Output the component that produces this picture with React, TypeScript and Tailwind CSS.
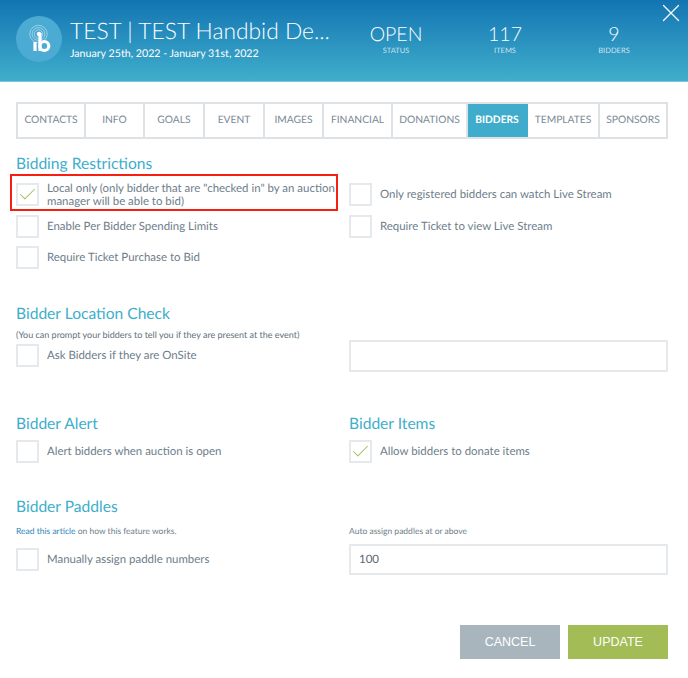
import { X, Check } from 'lucide-react';

const lato = "font-['Lato',sans-serif]";

const tabs = [
  { label: 'CONTACTS', width: 'w-[68px]' },
  { label: 'INFO', width: 'w-[59px]' },
  { label: 'GOALS', width: 'w-[60px]' },
  { label: 'EVENT', width: 'w-[60px]' },
  { label: 'IMAGES', width: 'w-[59px]' },
  { label: 'FINANCIAL', width: 'w-[69px]' },
  { label: 'DONATIONS', width: 'w-[75px]' },
  { label: 'BIDDERS', width: 'w-[60px]', active: true },
  { label: 'TEMPLATES', width: 'w-[72px]' },
  { label: 'SPONSORS', width: 'flex-1' },
];

function Logo() {
  return (
    <svg width="46" height="46" viewBox="0 0 46 46" className="shrink-0">
      <circle cx="23" cy="23" r="23" fill="#4cabd3" />
      <g fill="none" stroke="#ffffff" strokeOpacity="0.55" strokeWidth="0.8">
        <circle cx="22.5" cy="18" r="8.7" />
        <circle cx="22.5" cy="18" r="6.4" />
        <circle cx="22.5" cy="18" r="4.2" />
      </g>
      <circle cx="23" cy="18" r="2.2" fill="#ffffff" />
      <path d="M24 17v18" stroke="#ffffff" strokeWidth="3.2" fill="none" />
      <path d="M19 26v9" stroke="#ffffff" strokeWidth="3.2" fill="none" />
      <circle cx="28.3" cy="30" r="4.5" stroke="#ffffff" strokeWidth="3.2" fill="none" />
    </svg>
  );
}

function Stat({ value, label, width }: { value: string; label: string; width: string }) {
  return (
    <div className={`${width} flex flex-col items-center text-white`}>
      <span className="text-[19.5px] leading-[24px] font-light">{value}</span>
      <span className="text-[7.5px] leading-[8px] text-white/75">{label}</span>
    </div>
  );
}

function Checkbox({ checked, label }: { checked?: boolean; label: string }) {
  return (
    <div className="flex items-center gap-2 h-[23px]">
      <span className="w-[23px] h-[23px] shrink-0 bg-white border-2 border-[#e6e9ec] flex items-center justify-center">
        {checked && <Check className="w-[21px] h-[21px] shrink-0 text-[#a3c063]" strokeWidth={1.2} />}
      </span>
      <span className="text-[11.45px] leading-[13px] text-[#6d7d8a]">{label}</span>
    </div>
  );
}

function Heading({ children }: { children: string }) {
  return <h3 className="text-[15.6px] leading-[20px] text-[#3eaecb]">{children}</h3>;
}

export default function App() {
  return (
    <div className={`${lato} [text-rendering:geometricPrecision] w-[688px] h-[678px] bg-white relative overflow-hidden`}>
      {/* Header */}
      <div className="h-[82px] bg-gradient-to-b from-[#1275b2] to-[#40aecb] border-b border-[#7cc6dc] flex pl-4 pt-4 relative">
        <Logo />
        <div className="ml-[8px] w-[270px] text-white">
          <div className="text-[22.8px] leading-[28px] font-light whitespace-nowrap">TEST | TEST Handbid De...</div>
          <div className="text-[10.65px] leading-[14px] mt-[3px]">January 25th, 2022 - January 31st, 2022</div>
        </div>
        <div className="flex items-start pt-[7px] ml-[23px]">
          <Stat value="OPEN" label="STATUS" width="w-[66px]" />
          <Stat value="117" label="ITEMS" width="w-[152px]" />
          <Stat value="9" label="BIDDERS" width="w-[66px]" />
        </div>
        <X className="absolute top-[-2px] right-[2px] w-[30px] h-[30px] text-white" strokeWidth={1} />
      </div>

      <div className="px-4 pt-5">
        {/* Tabs */}
        <div className="flex w-[652px] h-[37px] border-2 border-[#dfe2e4]">
          {tabs.map((tab) => (
            <div
              key={tab.label}
              className={`${tab.width} flex items-center justify-center pt-[1px] text-[10.25px] border-r-2 last:border-r-0 ${
                tab.active
                  ? 'bg-[#3faccb] text-white font-bold border-[#3faccb]'
                  : 'text-[#7b8a96] border-[#dfe2e4]'
              }`}
            >
              {tab.label}
            </div>
          ))}
        </div>

        {/* Bidding Restrictions */}
        <div className="mt-[15px]">
          <Heading>Bidding Restrictions</Heading>
          <div className="grid grid-cols-[333px_319px] mt-[9px] relative">
            <div className="flex flex-col gap-[8.5px]">
              <Checkbox checked label={'Local only (only bidder that are "checked in" by an auction manager will be able to bid)'} />
              <Checkbox label="Enable Per Bidder Spending Limits" />
              <Checkbox label="Require Ticket Purchase to Bid" />
            </div>
            <div className="flex flex-col gap-[8.5px]">
              <Checkbox label="Only registered bidders can watch Live Stream" />
              <Checkbox label="Require Ticket to view Live Stream" />
            </div>
            <div className="absolute left-[-6px] top-[-9px] w-[328px] h-[37px] border-2 border-[#f5200f]" />
          </div>
        </div>

        {/* Bidder Location Check */}
        <div className="mt-[35px]">
          <Heading>Bidder Location Check</Heading>
          <div className="grid grid-cols-[333px_319px]">
            <div>
              <p className="text-[9px] leading-[12px] text-[#5f6f7b] mt-[5px] mb-[3px]">(You can prompt your bidders to tell you if they are present at the event)</p>
              <Checkbox label="Ask Bidders if they are OnSite" />
            </div>
            <div className="pt-[16px]">
              <div className="h-[32px] border-2 border-[#e6e9ec]" />
            </div>
          </div>
        </div>

        {/* Alert + Items */}
        <div className="grid grid-cols-[333px_319px] mt-[42px]">
          <div>
            <Heading>Bidder Alert</Heading>
            <div className="mt-[6px]">
              <Checkbox label="Alert bidders when auction is open" />
            </div>
          </div>
          <div>
            <Heading>Bidder Items</Heading>
            <div className="mt-[6px]">
              <Checkbox checked label="Allow bidders to donate items" />
            </div>
          </div>
        </div>

        {/* Bidder Paddles */}
        <div className="mt-[34px]">
          <Heading>Bidder Paddles</Heading>
          <div className="grid grid-cols-[333px_319px]">
            <div>
              <p className="text-[8.5px] leading-[12px] text-[#6d7d8a] mt-[8px] mb-[11px]">
                <span className="text-[#2f86b8]">Read this article</span> on how this feature works.
              </p>
              <Checkbox label="Manually assign paddle numbers" />
            </div>
            <div>
              <p className="text-[8.5px] leading-[12px] text-[#6d7d8a] mt-[8px] mb-[7px]">Auto assign paddles at or above</p>
              <div className="h-[31px] border-2 border-[#e6e9ec] flex items-center pl-[8px] pt-[1px] text-[11.5px] text-[#5b6670]">100</div>
            </div>
          </div>
        </div>

        {/* Actions */}
        <div className="flex justify-end gap-2 mt-[50px] w-[652px]">
          <button className="w-[100px] h-[34px] bg-[#a9b5bc] text-white text-[12.5px] font-['Liberation_Sans',sans-serif]">CANCEL</button>
          <button className="w-[100px] h-[34px] bg-[#a3bc55] text-white text-[12.5px] font-['Liberation_Sans',sans-serif]">UPDATE</button>
        </div>
      </div>
    </div>
  );
}
